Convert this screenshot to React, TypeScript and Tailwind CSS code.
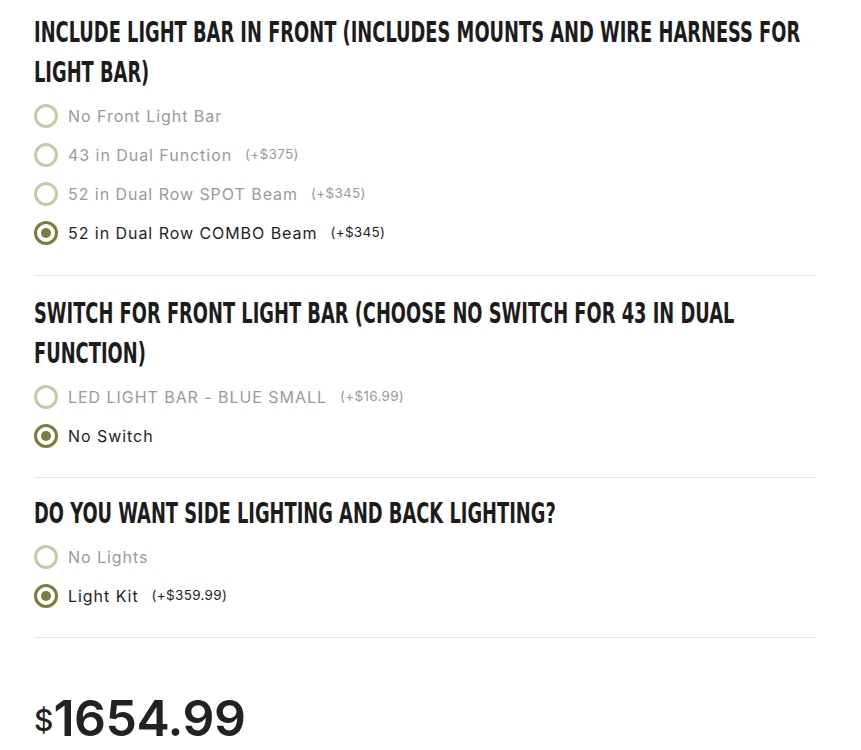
import React from 'react';

type Opt = { label: string; price?: string; selected?: boolean };

// heading lines are split the way the reference wraps them
const sections: { lines: string[]; options: Opt[]; pad: string }[] = [
  {
    lines: ['Include Light Bar in Front (includes mounts and wire harness for', 'light bar)'],
    pad: 'pt-[12px] pb-[23px]',
    options: [
      { label: 'No Front Light Bar' },
      { label: '43 in Dual Function', price: '(+$375)' },
      { label: '52 in Dual Row SPOT Beam', price: '(+$345)' },
      { label: '52 in Dual Row COMBO Beam', price: '(+$345)', selected: true },
    ],
  },
  {
    lines: ['Switch for Front Light Bar (choose no switch for 43 in Dual', 'Function)'],
    pad: 'pt-[17px] pb-[22px]',
    options: [
      { label: 'LED LIGHT BAR - BLUE SMALL', price: '(+$16.99)' },
      { label: 'No Switch', selected: true },
    ],
  },
  {
    lines: ['Do you want side lighting and back lighting?'],
    pad: 'pt-[15px] pb-[22px]',
    options: [
      { label: 'No Lights' },
      { label: 'Light Kit', price: '(+$359.99)', selected: true },
    ],
  },
];

const Radio = ({ selected }: { selected?: boolean }) => (
  <span
    className={`w-[24px] h-[24px] rounded-full border-[3px] flex items-center justify-center shrink-0 ${
      selected ? 'border-[#7c7a3d]' : 'border-[#c9c8a8]'
    }`}
  >
    {selected && <span className="w-[10px] h-[10px] rounded-full bg-[#7c7a3d]" />}
  </span>
);

const Section = ({ lines, options, pad }: { lines: string[]; options: Opt[]; pad: string }) => (
  <div className={`${pad} border-b border-[#e6e6e6]`}>
    <h2 className="uppercase font-bold text-[29px] leading-[40px] text-[#1c1c1c] [font-family:'DejaVu_Sans_Condensed','DejaVu_Sans',sans-serif]">
      {lines.map((l) => (
        <span key={l} className="block whitespace-nowrap origin-left scale-x-[0.684]">
          {l}
        </span>
      ))}
    </h2>
    <div className="mt-[4px] flex flex-col">
      {options.map((o) => (
        <label key={o.label} className="h-[39px] flex items-center gap-[10px] cursor-pointer">
          <Radio selected={o.selected} />
          <span className={`text-[16px] tracking-[0.95px] ${o.selected ? 'text-[#1e1e1e]' : 'text-[#9a9a9a]'}`}>
            {o.label}
          </span>
          {o.price && (
            <span className={`ml-[3px] text-[13.5px] tracking-[0.3px] ${o.selected ? 'text-[#1e1e1e]' : 'text-[#9a9a9a]'}`}>
              {o.price}
            </span>
          )}
        </label>
      ))}
    </div>
  </div>
);

export default function App() {
  return (
    <div className="min-h-[750px] overflow-hidden bg-white [font-family:Inter,'Open_Sans',sans-serif]">
      <div className="ml-[34px] w-[782px]">
        {sections.map((s, i) => (
          <Section key={i} lines={s.lines} options={s.options} pad={s.pad} />
        ))}
        <div className="pt-[55px] flex items-start text-[#222]">
          <span className="text-[30px] leading-none font-medium mt-[12px]">$</span>
          <span className="text-[50px] leading-none font-semibold tracking-[-0.5px]">1654.99</span>
        </div>
      </div>
    </div>
  );
}
